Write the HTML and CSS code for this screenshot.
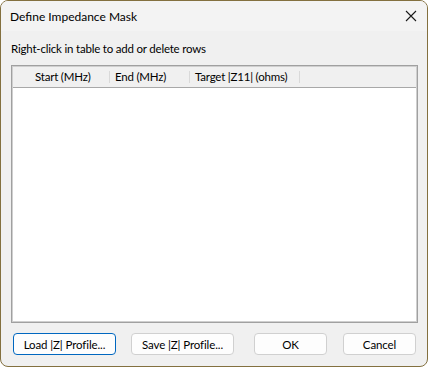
FILE: index.html
```html
<!DOCTYPE html>
<html lang="en">
<head>
<meta charset="UTF-8">
<meta name="viewport" content="width=device-width, initial-scale=1.0">
<title>Define Impedance Mask</title>
<link rel="stylesheet" href="styles.css">
</head>
<body>
<div class="window">
    <div class="titlebar">
        <span class="title">Define Impedance Mask</span>
        <svg class="close" width="12" height="12" viewBox="0 0 12 12">
            <path d="M1 1 L11 11 M11 1 L1 11" stroke="#1a1a1a" stroke-width="1.1" fill="none" />
        </svg>
    </div>
    <div class="content">
        <div class="hint">Right-click in table to add or delete rows</div>
        <div class="table">
            <div class="table-head">
                <div class="col col-start">Start (MHz)</div>
                <div class="col col-end">End (MHz)</div>
                <div class="col col-target">Target |Z11| (ohms)</div>
            </div>
            <div class="table-body"></div>
        </div>
        <div class="actions">
            <button class="btn btn-load">Load |Z| Profile...</button>
            <button class="btn btn-save">Save |Z| Profile...</button>
            <button class="btn btn-ok">OK</button>
            <button class="btn btn-cancel">Cancel</button>
        </div>
    </div>
</div>
</body>
</html>
```

FILE: styles.css
```css
body {
    margin: 0;
    font-family: Lato, "Liberation Sans", Arial, sans-serif;
    font-size: 11.5px;
    letter-spacing: -0.2px;
    color: #000;
    background: #fff;
}

.window {
    width: 428px;
    height: 367px;
    box-sizing: border-box;
    border: 1px solid #83703f;
    border-radius: 8px;
    background: #f0f0f0;
    overflow: hidden;
    display: flex;
    flex-direction: column;
}

.titlebar {
    height: 30px;
    background: #f3f3f3;
    display: flex;
    align-items: center;
    justify-content: space-between;
    padding: 0 10px 0 9px;
}

.title {
    font-size: 12px;
    letter-spacing: 0;
    color: #000;
}

.content {
    padding: 0 9px 0 10px;
}

.hint {
    padding-top: 10px;
    line-height: 16px;
    height: 16px;
}

.table {
    margin-top: 8px;
    height: 258px;
    box-sizing: border-box;
    border: 1px solid #a0a0a0;
    box-shadow: inset 0 0 0 1px #cfcfcf;
    background: #fff;
    padding: 1px;
    display: flex;
    flex-direction: column;
}

.table-head {
    height: 20px;
    background: #f0f0f0;
    border-bottom: 1px solid #a8a8a8;
    display: flex;
    align-items: center;
}

.col {
    height: 12px;
    line-height: 12px;
    border-right: 1px solid #d9d9d9;
    box-sizing: border-box;
    padding-left: 5px;
    white-space: nowrap;
}

.col-start {
    width: 97px;
    padding-left: 22px;
}

.col-end {
    width: 80px;
}

.col-target {
    width: 110px;
}

.table-body {
    flex: 1;
    background: #fff;
}

.actions {
    margin-top: 10px;
    padding-left: 2px;
    display: flex;
}

.btn {
    height: 22px;
    box-sizing: border-box;
    background: #fdfdfd;
    border: 1px solid #d0d0d0;
    border-radius: 4px;
    font-family: inherit;
    font-size: 11.5px;
    letter-spacing: -0.1px;
    color: #000;
    padding: 0;
}

.btn-load {
    width: 103px;
    border-color: #0067c0;
}

.btn-save {
    width: 103px;
    margin-left: 15px;
}

.btn-ok {
    width: 73px;
    margin-left: 20px;
}

.btn-cancel {
    width: 73px;
    margin-left: 16px;
}
```
